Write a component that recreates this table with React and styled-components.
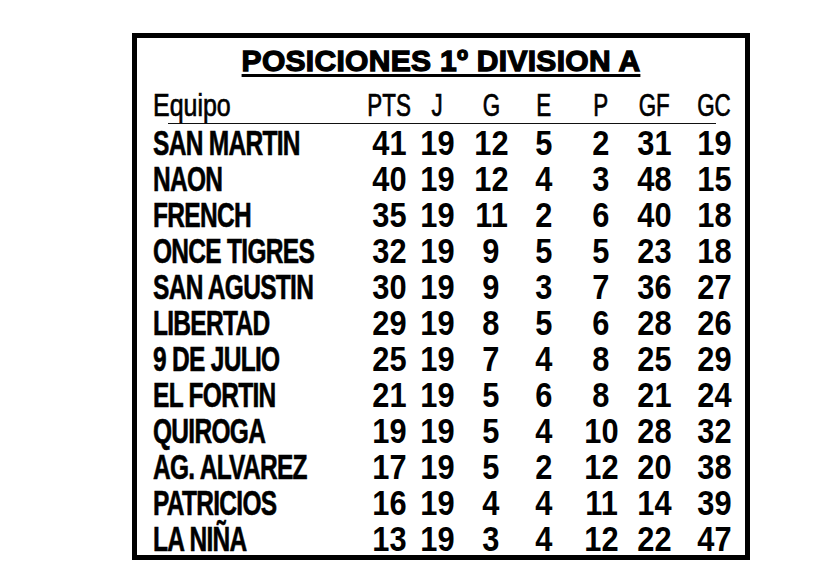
import React from 'react';
import styled, { createGlobalStyle } from 'styled-components';

const GlobalStyle = createGlobalStyle`
  html, body {
    margin: 0;
    padding: 0;
    background: #ffffff;
  }
`;

const Page = styled.div`
  width: 825px;
  height: 579px;
  padding: 33px 0 0 132px;
  box-sizing: border-box;
  background: #ffffff;
`;

const Frame = styled.div`
  width: 618px;
  height: 527px;
  box-sizing: border-box;
  border: 5px solid #000;
  padding-top: 5px;
  color: #000;
  font-family: "Liberation Sans", Arial, sans-serif;
`;

const Title = styled.h1`
  margin: 0;
  text-align: center;
  font-size: 30px;
  line-height: 36px;
  font-weight: bold;
  letter-spacing: 0.3px;
  -webkit-text-stroke: 1.3px #000;
  span {
    text-decoration: underline;
    text-decoration-thickness: 3px;
    text-underline-offset: 3px;
  }
`;

const Table = styled.div`
  margin-top: 8px;
  padding-left: 16px;
`;

const Row = styled.div`
  display: grid;
  grid-template-columns: 215px 42px 54px 54px 52px 62px 44px 76px;
  height: 36px;
  line-height: 36px;
  font-size: ${(p) => (p.$head ? '32px' : '35px')};
  font-weight: ${(p) => (p.$head ? 'normal' : 'bold')};
  white-space: nowrap;
`;

const Cell = styled.div`
  display: flex;
  justify-content: ${(p) => (p.$left ? 'flex-start' : 'center')};
`;

/* the print face is a condensed gothic; narrow Liberation Sans to match */
const Team = styled.span`
  transform: scaleX(${(p) => (p.$head ? 0.78 : 0.7)});
  transform-origin: left center;
  letter-spacing: ${(p) => (p.$head ? '0' : '-1px')};
  -webkit-text-stroke: ${(p) => (p.$head ? '0.7px' : '0.6px')} #000;
`;

const Num = styled.span`
  flex: none;
  transform: scaleX(${(p) => (p.$head ? 0.7 : 0.88)});
  transform-origin: center;
  -webkit-text-stroke: ${(p) => (p.$head ? '0.7px' : '0')} #000;
`;

const Rule = styled.div`
  margin: 0 0 1px 15px;
  width: 548px;
  height: 1px;
  background: #111;
`;

const columns = ['PTS', 'J', 'G', 'E', 'P', 'GF', 'GC'];

const standings = [
  ['SAN MARTIN', 41, 19, 12, 5, 2, 31, 19],
  ['NAON', 40, 19, 12, 4, 3, 48, 15],
  ['FRENCH', 35, 19, 11, 2, 6, 40, 18],
  ['ONCE TIGRES', 32, 19, 9, 5, 5, 23, 18],
  ['SAN AGUSTIN', 30, 19, 9, 3, 7, 36, 27],
  ['LIBERTAD', 29, 19, 8, 5, 6, 28, 26],
  ['9 DE JULIO', 25, 19, 7, 4, 8, 25, 29],
  ['EL FORTIN', 21, 19, 5, 6, 8, 21, 24],
  ['QUIROGA', 19, 19, 5, 4, 10, 28, 32],
  ['AG. ALVAREZ', 17, 19, 5, 2, 12, 20, 38],
  ['PATRICIOS', 16, 19, 4, 4, 11, 14, 39],
  ['LA NIÑA', 13, 19, 3, 4, 12, 22, 47],
];

export default function App() {
  return (
    <Page>
      <GlobalStyle />
      <Frame>
        <Title>
          <span>POSICIONES 1º DIVISION A</span>
        </Title>
        <Table>
          <Row $head>
            <Cell $left>
              <Team $head>Equipo</Team>
            </Cell>
            {columns.map((c) => (
              <Cell key={c}>
                <Num $head>{c}</Num>
              </Cell>
            ))}
          </Row>
          <Rule />
          {standings.map(([team, ...stats]) => (
            <Row key={team}>
              <Cell $left>
                <Team>{team}</Team>
              </Cell>
              {stats.map((v, i) => (
                <Cell key={i}>
                  <Num>{v}</Num>
                </Cell>
              ))}
            </Row>
          ))}
        </Table>
      </Frame>
    </Page>
  );
}
